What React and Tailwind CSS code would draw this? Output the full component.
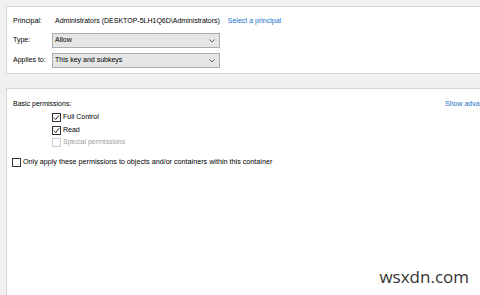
import React from "react";

const font = { fontFamily: '"Liberation Sans", Arial, sans-serif' };

const Checkbox = ({ checked, disabled }) => (
  <span
    className={
      "w-[9px] h-[9px] border shrink-0 bg-white flex items-center justify-center " +
      (disabled ? "border-[#cccccc]" : "border-[#333333]")
    }
  >
    {checked && (
      <svg width="7" height="7" viewBox="0 0 7 7">
        <path d="M0.8 3.6 L2.7 5.5 L6.2 1.2" fill="none" stroke="#222" strokeWidth="1" />
      </svg>
    )}
  </span>
);

const Dropdown = ({ value }) => (
  <div className="w-[168px] h-[15px] bg-[#e5e5e5] border border-[#adadad] flex items-center justify-between pl-[2px] pr-[4px]">
    <span>{value}</span>
    <svg width="6" height="4" viewBox="0 0 6 4">
      <path d="M0.5 0.5 L3 3 L5.5 0.5" fill="none" stroke="#555" strokeWidth="0.9" />
    </svg>
  </div>
);

const App = () => {
  return (
    <div
      className="w-[480px] h-[295px] bg-[#f0f0f0] pt-[6px] pl-[6px] flex flex-col overflow-hidden text-[7px] text-black"
      style={font}
    >
      {/* Principal / type / applies to */}
      <div className="h-[68px] bg-white border-l border-t border-b border-[#d5d5d5] pl-[6px] pt-[7px] flex flex-col gap-[5px]">
        <div className="flex items-center h-[14px]">
          <span className="w-[41px]">Principal:</span>
          <span className="ml-[1px]">Administrators (DESKTOP-5LH1Q6D\Administrators)</span>
          <span className="ml-[8px] text-[#1a6fc9]">Select a principal</span>
        </div>
        <div className="flex items-center">
          <span className="w-[39px]">Type:</span>
          <Dropdown value="Allow" />
        </div>
        <div className="flex items-center">
          <span className="w-[39px]">Applies to:</span>
          <Dropdown value="This key and subkeys" />
        </div>
      </div>

      {/* Permissions */}
      <div className="mt-[14px] flex-1 bg-white border-l border-t border-[#d5d5d5] pl-[5px] pt-[9px] flex flex-col">
        <div className="flex items-center h-[12px] ml-[1px]">
          <span className="w-[432px] shrink-0">Basic permissions:</span>
          <span className="shrink-0 whitespace-nowrap text-[#1a6fc9]">Show advanced permissions</span>
        </div>
        <div className="flex flex-col pl-[40px] mt-[3px] gap-[3.5px]">
          <div className="flex items-center gap-[2px] h-[9px]">
            <Checkbox checked />
            <span>Full Control</span>
          </div>
          <div className="flex items-center gap-[2px] h-[9px]">
            <Checkbox checked />
            <span>Read</span>
          </div>
          <div className="flex items-center gap-[2px] h-[9px] text-[#a0a0a0]">
            <Checkbox disabled />
            <span>Special permissions</span>
          </div>
        </div>
        <div className="flex items-center gap-[2px] h-[9px] mt-[11px]">
          <Checkbox />
          <span className="text-[7.2px]">Only apply these permissions to objects and/or containers within this container</span>
        </div>
        <div className="mt-auto flex justify-end pr-[11px] pb-[6px]">
          <span className="text-[17px] text-[#333]" style={{ fontFamily: '"Open Sans", sans-serif' }}>
            wsxdn.com
          </span>
        </div>
      </div>
    </div>
  );
};

export default App;
